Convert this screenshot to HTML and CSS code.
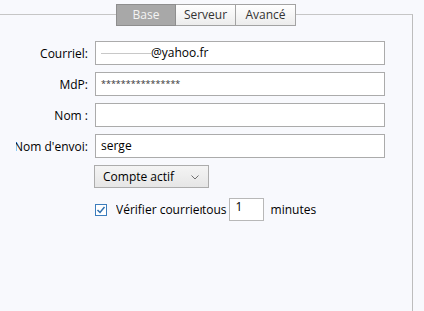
FILE: index.html
```html
<!DOCTYPE html>
<html lang="fr">
  <head>
    <meta charset="UTF-8" />
    <title>Compte</title>
    <link rel="stylesheet" href="styles.css">
  </head>
  <body>
    <div class="frame">
      <div class="tabs">
        <span class="tab active">Base</span>
        <span class="tab">Serveur</span>
        <span class="tab">Avancé</span>
      </div>

      <div class="form">
        <div class="row">
          <div class="label"><span>Courriel:</span></div>
          <div class="field"><span class="smudge"></span>@yahoo.fr</div>
        </div>
        <div class="row">
          <div class="label"><span>MdP:</span></div>
          <div class="field password">****************</div>
        </div>
        <div class="row">
          <div class="label"><span>Nom :</span></div>
          <div class="field"></div>
        </div>
        <div class="row">
          <div class="label"><span>Nom d'envoi:</span></div>
          <div class="field">serge</div>
        </div>

        <div class="select-row">
          <div class="select">
            <span>Compte actif</span>
            <svg class="chevron" width="8" height="5" viewBox="0 0 8 5">
              <polyline points="0.5,0.5 4,4 7.5,0.5" fill="none" stroke="#707070" stroke-width="1" />
            </svg>
          </div>
        </div>

        <div class="check-row">
          <svg class="checkbox" width="12" height="12" viewBox="0 0 12 12">
            <rect x="0.5" y="0.5" width="11" height="11" fill="#fff" stroke="#3c7dbd" />
            <polyline points="2.5,6 5,8.5 9.5,3" fill="none" stroke="#2f6fae" stroke-width="1.5" />
          </svg>
          <span class="check-label">Vérifier courrier</span>
          <span>tous</span>
          <div class="number">1</div>
          <span class="unit">minutes</span>
        </div>
      </div>
    </div>
  </body>
</html>
```

FILE: styles.css
```css
body {
  margin: 0;
  background: #f8f9fd;
  font-family: "Open Sans", sans-serif;
  font-size: 12px;
  color: #000;
  height: 311px;
  overflow: hidden;
}

.frame {
  box-sizing: border-box;
  width: 413px;
  height: 297px;
  margin-top: 14px;
  border-top: 1px solid #c6c6c6;
  border-right: 1px solid #bdbdbd;
}

.tabs {
  display: flex;
  justify-content: center;
  margin-top: -11px;
}

.tab {
  box-sizing: border-box;
  width: 60px;
  height: 22px;
  line-height: 20px;
  text-align: center;
  color: #333;
  background: linear-gradient(#ffffff, #ececec);
  border: 1px solid #a3a3a3;
  border-left: none;
}

.tab.active {
  background: #a8a8a8;
  color: #f4f4f4;
  border-left: 1px solid #8e8e8e;
  border-color: #8e8e8e;
}

.form {
  margin-top: 15px;
}

.row {
  display: flex;
  align-items: center;
  height: 24px;
  margin-bottom: 7px;
}

.label {
  width: 72px;
  margin-left: 16px;
  margin-right: 7px;
  display: flex;
  justify-content: flex-end;
  overflow: hidden;
  white-space: nowrap;
}

.field {
  box-sizing: border-box;
  width: 290px;
  height: 24px;
  line-height: 22px;
  padding-left: 5px;
  background: #fff;
  border: 1px solid #ababab;
  white-space: nowrap;
}

.smudge {
  display: inline-block;
  width: 50px;
  height: 1px;
  margin-bottom: 3px;
  background: #c8c8c8;
}

.password {
  font-size: 9px;
  color: #333;
}

.select-row {
  padding-left: 94px;
}

.select {
  box-sizing: border-box;
  width: 115px;
  height: 23px;
  display: flex;
  align-items: center;
  justify-content: space-between;
  padding: 0 9px 0 8px;
  background: linear-gradient(#f4f4f4, #e6e6e6);
  border: 1px solid #acacac;
}

.chevron {
  margin-top: 1px;
}

.check-row {
  display: flex;
  align-items: center;
  margin-top: 10px;
  padding-left: 95px;
}

.check-label {
  width: 86px;
  margin-left: 9px;
  overflow: hidden;
  white-space: nowrap;
}

.number {
  box-sizing: border-box;
  width: 35px;
  height: 23px;
  margin-left: 2px;
  padding-left: 6px;
  line-height: 16px;
  background: #fff;
  border: 1px solid #b8b8b8;
}

.unit {
  margin-left: 7px;
}
```
